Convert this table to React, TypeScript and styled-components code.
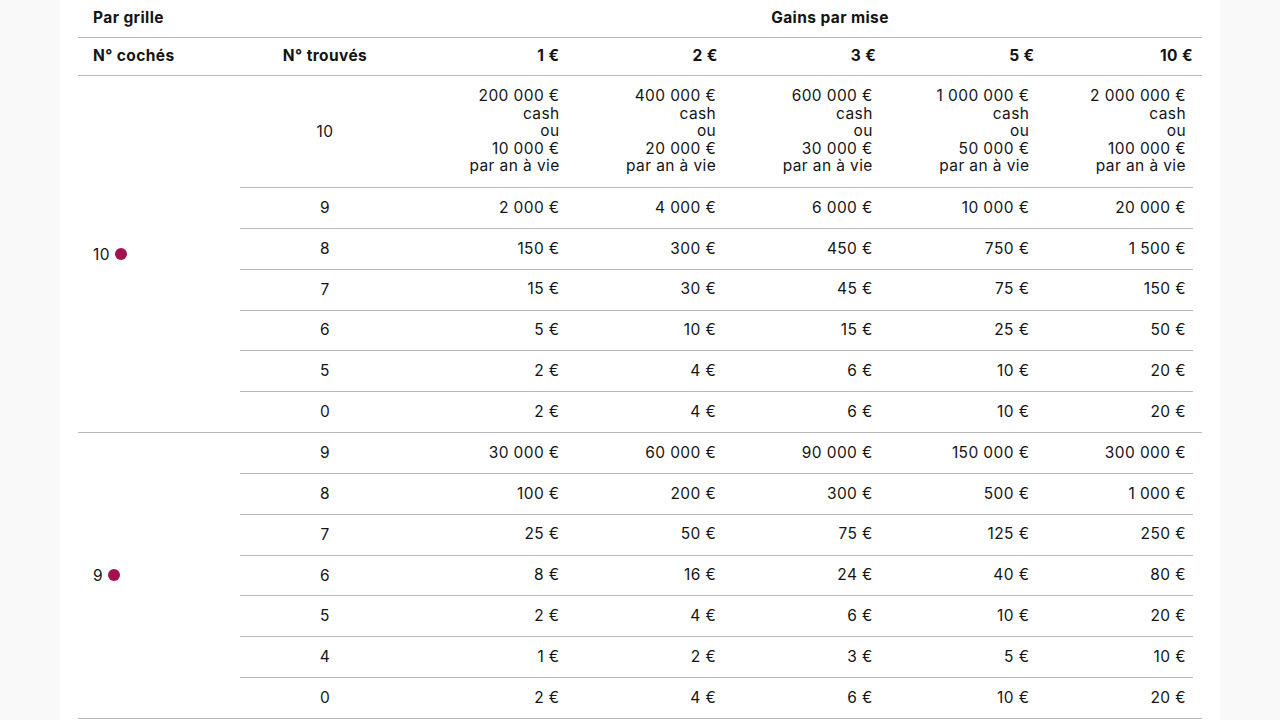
import { createGlobalStyle, styled } from "styled-components";

const GlobalStyle = createGlobalStyle`
  html, body {
    margin: 0;
    background: #f9f9f9;
  }
  body {
    font-family: Inter, "Liberation Sans", sans-serif;
    color: #141414;
  }
`;

const Page = styled.div`
  width: 1160px;
  min-height: 720px;
  margin-left: 60px;
  padding: 0 18px;
  box-sizing: border-box;
  background: #ffffff;
  font-size: 15.5px;
  letter-spacing: 0.4px;
`;

const HeadRow = styled.div<{ $height: number }>`
  display: flex;
  align-items: center;
  height: ${(p) => p.$height}px;
  padding-bottom: 2px;
  border-bottom: 1px solid #b8b8b8;
  box-sizing: border-box;
  font-weight: 700;
`;

const GridTitle = styled.div`
  width: 380px;
  padding-left: 15px;
  box-sizing: border-box;
`;

const GainsTitle = styled.div`
  flex: 1;
  text-align: center;
`;

const CheckedHead = styled.div`
  width: 162px;
  padding-left: 15px;
  box-sizing: border-box;
`;

const FoundHead = styled.div`
  width: 170px;
  text-align: center;
`;

const StakeHead = styled.div`
  flex: 1;
  text-align: right;
  padding-right: 9px;
`;

const Group = styled.div`
  display: flex;
  border-bottom: 1px solid #b8b8b8;
`;

const CheckedCell = styled.div`
  width: 162px;
  padding-left: 15px;
  box-sizing: border-box;
  display: flex;
  align-items: center;
  gap: 5px;
`;

const Dot = styled.span`
  width: 12px;
  height: 12px;
  margin-top: -1px;
  border-radius: 50%;
  background: #a3124f;
`;

const Rows = styled.div`
  flex: 1;
  margin-right: 9px;
  display: flex;
  flex-direction: column;
`;

const Row = styled.div<{ $tall?: boolean }>`
  display: flex;
  align-items: center;
  height: ${(p) => (p.$tall ? "112px" : "40.85px")};
  padding-bottom: 1px;
  box-sizing: border-box;
  border-bottom: 1px solid #b8b8b8;
  &:last-child {
    border-bottom: none;
    height: 39.85px;
  }
`;

const FoundCell = styled.div`
  width: 170px;
  text-align: center;
`;

const Amount = styled.div`
  flex: 1;
  text-align: right;
  padding-right: 7px;
  line-height: 17.5px;
`;

const stakes = ["1 €", "2 €", "3 €", "5 €", "10 €"];

type Line = { found: string; gains: string[] };

const jackpot = (cash: string, yearly: string) => (
  <>
    {cash}
    <br />
    cash
    <br />
    ou
    <br />
    {yearly}
    <br />
    par an à vie
  </>
);

const groups: { checked: string; lines: Line[] }[] = [
  {
    checked: "10",
    lines: [
      { found: "10", gains: [] },
      { found: "9", gains: ["2 000 €", "4 000 €", "6 000 €", "10 000 €", "20 000 €"] },
      { found: "8", gains: ["150 €", "300 €", "450 €", "750 €", "1 500 €"] },
      { found: "7", gains: ["15 €", "30 €", "45 €", "75 €", "150 €"] },
      { found: "6", gains: ["5 €", "10 €", "15 €", "25 €", "50 €"] },
      { found: "5", gains: ["2 €", "4 €", "6 €", "10 €", "20 €"] },
      { found: "0", gains: ["2 €", "4 €", "6 €", "10 €", "20 €"] },
    ],
  },
  {
    checked: "9",
    lines: [
      { found: "9", gains: ["30 000 €", "60 000 €", "90 000 €", "150 000 €", "300 000 €"] },
      { found: "8", gains: ["100 €", "200 €", "300 €", "500 €", "1 000 €"] },
      { found: "7", gains: ["25 €", "50 €", "75 €", "125 €", "250 €"] },
      { found: "6", gains: ["8 €", "16 €", "24 €", "40 €", "80 €"] },
      { found: "5", gains: ["2 €", "4 €", "6 €", "10 €", "20 €"] },
      { found: "4", gains: ["1 €", "2 €", "3 €", "5 €", "10 €"] },
      { found: "0", gains: ["2 €", "4 €", "6 €", "10 €", "20 €"] },
    ],
  },
];

const topPrizes = [
  ["200 000 €", "10 000 €"],
  ["400 000 €", "20 000 €"],
  ["600 000 €", "30 000 €"],
  ["1 000 000 €", "50 000 €"],
  ["2 000 000 €", "100 000 €"],
];

export default function App() {
  return (
    <>
      <GlobalStyle />
      <Page>
        <HeadRow $height={38}>
          <GridTitle>Par grille</GridTitle>
          <GainsTitle>Gains par mise</GainsTitle>
        </HeadRow>
        <HeadRow $height={38}>
          <CheckedHead>N° cochés</CheckedHead>
          <FoundHead>N° trouvés</FoundHead>
          {stakes.map((s) => (
            <StakeHead key={s}>{s}</StakeHead>
          ))}
        </HeadRow>
        {groups.map((g) => (
          <Group key={g.checked}>
            <CheckedCell>
              {g.checked}
              <Dot />
            </CheckedCell>
            <Rows>
              {g.lines.map((l) => (
                <Row key={l.found} $tall={l.gains.length === 0}>
                  <FoundCell>{l.found}</FoundCell>
                  {l.gains.length === 0
                    ? topPrizes.map(([cash, yearly]) => (
                        <Amount key={cash}>{jackpot(cash, yearly)}</Amount>
                      ))
                    : l.gains.map((v, i) => <Amount key={i}>{v}</Amount>)}
                </Row>
              ))}
            </Rows>
          </Group>
        ))}
      </Page>
    </>
  );
}
